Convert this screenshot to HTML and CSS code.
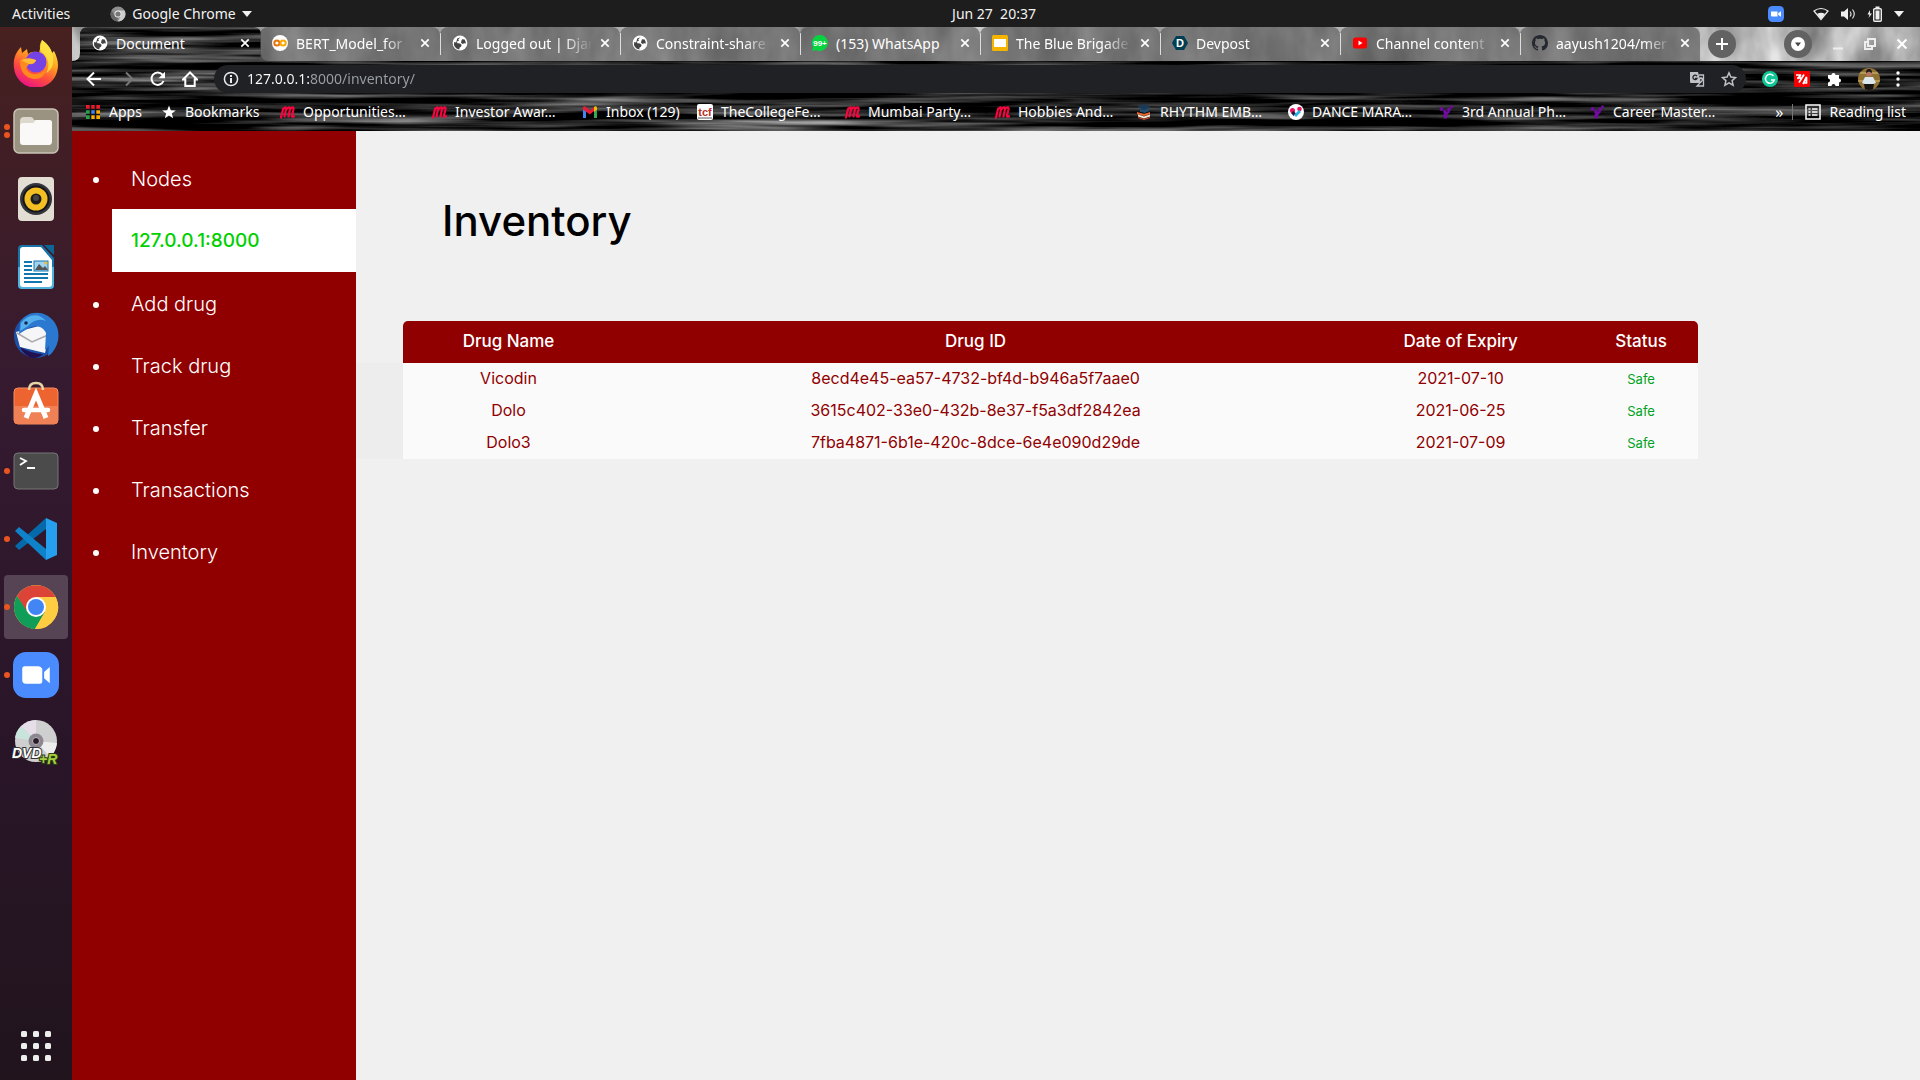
FILE: index.html
```html
<!DOCTYPE html>
<html lang="en">
<head>
<meta charset="utf-8">
<title>Document</title>
<link rel="stylesheet" href="styles.css">
</head>
<body>
<svg class="defs" width="0" height="0" aria-hidden="true">
  <defs>
    <symbol id="globe" viewBox="0 0 16 16"><circle cx="8" cy="8" r="7.4" fill="#fff"/><path d="M8.6 2.2 6.3 4.3l.6 1.5-2 .7.5 1.8 2.700.2 1.500 1.500-.6 1.800-1.600.9v1.900A6 6 0 0 1 2.200 7l2 .4L5.200 3.500ZM10 4.300l2.600.3A6 6 0 0 1 13.800 8.600l-1.600-.3-1.500.8-1.700-1.400.3-1.500Z" fill="#444"/></symbol>
    <symbol id="cross" viewBox="0 0 10 10"><path d="M1.300 1.300l7.400 7.400M8.700 1.300l-7.400 7.400" stroke="#fff" stroke-width="1.700" fill="none"/></symbol>
    <symbol id="meetup" viewBox="0 0 16 16"><path d="M2 13.500 4.200 4.600M4 5.500C6 2.500 7.600 3 7 5.600L5.500 12.500M7.300 5.500C9.500 2.500 11.500 3 10.900 5.500L9.500 12.500M11 5.500c1.500-3 4-2.800 3.500-.2L13 11.500c-.3 1.500.7 1.500 2 .7" fill="none" stroke="#f5063f" stroke-width="2.200" stroke-linecap="round" stroke-linejoin="round"/></symbol>
    <symbol id="yocket" viewBox="0 0 16 16"><g fill="#6f0b9e"><circle cx="3.500" cy="5" r="2"/><circle cx="7" cy="7.500" r="1.700"/><circle cx="13.500" cy="2.800" r="1.500"/><circle cx="11" cy="5.500" r="2"/><path d="M5 7l3.500 1L11 6l1 2-2.800 3-.2 3.500H6.200L5 12l1-2Z"/></g></symbol>
    <symbol id="camera" viewBox="0 0 24 16"><path d="M1 3q0-2 2-2h11q2 0 3 2v10q0 2-2 2H4q-3 0-3-3ZM18.500 5.500 23 1.500v13l-4.500-4Z" fill="#fff"/></symbol>
  </defs>
</svg>

<header class="topbar">
  <div class="topbar-left">
    <button class="sys-button">Activities</button>
    <button class="sys-button app-menu">
      <svg width="16" height="16" viewBox="0 0 16 16"><circle cx="8" cy="8" r="7.500" fill="#8f8f8f"/><path d="M8 4.500h6.600A7.500 7.500 0 0 1 8 15.500l3-5.700Z" fill="#ccc"/><path d="M1.600 4.200 5 10l3 2-1 3.300A7.500 7.500 0 0 1 1.600 4.200Z" fill="#666"/><circle cx="8" cy="8" r="3.500" fill="#eee"/><circle cx="8" cy="8" r="2.600" fill="#777"/></svg>
      <span>Google Chrome</span>
      <svg width="10" height="6" viewBox="0 0 10 6"><path d="M0 0h10L5 6Z" fill="#f2f2f2"/></svg>
    </button>
  </div>
  <button class="sys-button clock">Jun 27&nbsp; 20:37</button>
  <div class="tray">
    <svg class="tray-zoom" width="16" height="16" viewBox="0 0 16 16"><rect width="16" height="16" rx="4.500" fill="#4a8cff"/><path d="M3 5.500h6.500v5H4q-1 0-1-1ZM10.300 7l2.700-1.700v5.400L10.300 9Z" fill="#fff"/></svg>
    <svg width="16" height="14" viewBox="0 0 16 14"><path d="M1 4q7-5 14 0L8 12.500Z" fill="none" stroke="#eee" stroke-width="1.200"/><path d="M4 7q4-2.500 8 0l-4 5Z" fill="#eee"/></svg>
    <svg width="16" height="14" viewBox="0 0 16 14"><path d="M1 4.500h3L8 1v12L4 9.500H1Z" fill="#eee"/><path d="M10 4.500q2 2.500 0 5M12.500 2.500q3.500 4.500 0 9" fill="none" stroke="#ddd" stroke-width="1.200"/></svg>
    <svg width="16" height="16" viewBox="0 0 16 16"><path d="M3 4 .5 8.500h2L1.500 12 5 7.500H3Z" fill="#eee"/><rect x="6.700" y="2.700" width="7.600" height="12.600" rx="1" fill="none" stroke="#eee" stroke-width="1.400"/><rect x="8.500" y="4.500" width="4" height="9" fill="#eee"/><rect x="8.500" y=".5" width="4" height="2" fill="#eee"/></svg>
    <svg width="10" height="6" viewBox="0 0 10 6"><path d="M0 0h10L5 6Z" fill="#f2f2f2"/></svg>
  </div>
</header>

<div class="desktop">
  <nav class="dock" aria-label="Dock">
    <button class="dock-item" aria-label="Firefox">
      <svg width="48" height="48" viewBox="0 0 48 48"><defs><linearGradient id="ff" x1=".8" y1="0" x2=".3" y2="1"><stop offset="0" stop-color="#fff44f"/><stop offset=".4" stop-color="#ffa020"/><stop offset=".7" stop-color="#ff4a40"/><stop offset="1" stop-color="#e8108a"/></linearGradient></defs><path d="M30 1c7 5 9 9 10 13l2-2c4 8 5 14 3 21A22 22 0 0 1 2 29c-1-8 1-15 7-21l1 6 5-4 1 5q5-4 11-1Z" fill="url(#ff)"/><path d="M30 1c-3 5-3 9 1 13 6 5 7 14 3 20 6-3 8-9 7-15 0-7-5-13-11-18Z" fill="#ffe444" opacity=".8"/><circle cx="24" cy="23" r="10.500" fill="#7542e5"/><path d="M8 22q7-5 16-1-1 5-7 4l-3 4q3 7 11 6 6-1 9-5-1 10-12 10C13 39 8 32 8 22Z" fill="#ff8a20"/><path d="M9 21q8-3 15 0-1 4-7 4Z" fill="#ffbd3a"/></svg>
    </button>
    <button class="dock-item running double" aria-label="Files">
      <svg width="48" height="48" viewBox="0 0 48 48"><rect x="2" y="2" width="44" height="44" rx="5" fill="#9b9381" stroke="#c8c3b5" stroke-width="1.500"/><path d="M8 14q0-4 4-4h7q2 0 3 3h15q3 0 3 3v5H8Z" fill="#ddd8ce"/><path d="M8 19q0-3 3-3h10l3-3h13q3 0 3 3v18q0 4-3 4H11q-3 0-3-3Z" fill="#faf9f7"/></svg>
    </button>
    <button class="dock-item" aria-label="Rhythmbox">
      <svg width="48" height="48" viewBox="0 0 48 48"><rect x="6" y="2" width="36" height="44" rx="4" fill="#e2ded3"/><circle cx="24" cy="24" r="16" fill="#33343c"/><circle cx="24" cy="24" r="13.500" fill="#15161a"/><circle cx="24" cy="24" r="11.500" fill="#f3bf22"/><circle cx="24" cy="24" r="5.500" fill="#1c1c1c"/><circle cx="24" cy="23" r="3" fill="#444"/></svg>
    </button>
    <button class="dock-item" aria-label="LibreOffice Writer">
      <svg width="48" height="48" viewBox="0 0 48 48"><path d="M10 2h20l12 13v27q0 4-4 4H10q-4 0-4-4V6q0-4 4-4Z" fill="#1773a8"/><path d="M6 24h36v18q0 4-4 4H10q-4 0-4-4Z" fill="#4fb2e0"/><path d="M11 4h18l11 13v24q0 3-3 3H11q-3 0-3-3V7q0-3 3-3Z" fill="#fff"/><path d="M32 2h10v10Z" fill="#0c6798"/><path d="M12 19h8M12 23h8M12 27h8M12 31h24M12 35h24M12 39h18" stroke="#1476ae" stroke-width="2"/><rect x="22" y="18" width="14" height="10" fill="#9ed4f2" stroke="#1476ae"/><path d="m23 27 4-6 4 4 2-2 3 4Z" fill="#555"/><circle cx="34" cy="20" r="1.500" fill="#f9b929"/></svg>
    </button>
    <button class="dock-item" aria-label="Thunderbird">
      <svg width="48" height="48" viewBox="0 0 48 48"><circle cx="24" cy="25" r="22" fill="#1d4fa6"/><path d="M4 21 31 14 37 26 33 42 8 36Z" fill="#f6f6f8"/><path d="m5 22 15 9 16-7" fill="none" stroke="#aaa" stroke-width="1.500"/><path d="M8 11C15-1 34-2 43 12c6 10 4 22-4 31l-3 2 1-10-4 4 1-17C31 15 23 13 15 18l-8 5Z" fill="#2a78cf"/><path d="M9 12C16 3 27 1 34 10q-10-4-18 5l-8 5Z" fill="#57b0ee"/><path d="M8 36q12 7 23 7-4 4-10 4Q12 45 8 36Z" fill="#210f50"/><circle cx="14" cy="12" r="1.800" fill="#142a55"/></svg>
    </button>
    <button class="dock-item" aria-label="Ubuntu Software">
      <svg width="48" height="48" viewBox="0 0 48 48"><rect x="2" y="9" width="44" height="36" rx="4" fill="#ee6430" stroke="#f58c60"/><path d="M2 27h44v14q0 4-4 4H6q-4 0-4-4Z" fill="#f08055"/><path d="M17 11q0-7 7-7t7 7" fill="none" stroke="#e8d6a6" stroke-width="2.500"/><path d="M14 39 24 15l10 24" fill="none" stroke="#fff" stroke-width="5"/><path d="M12 31h24" stroke="#fff" stroke-width="4.500" stroke-linecap="round"/></svg>
    </button>
    <button class="dock-item running" aria-label="Terminal">
      <svg width="48" height="48" viewBox="0 0 48 48"><rect x="2" y="6" width="44" height="36" rx="4" fill="#4b4b4b" stroke="#777"/><path d="m8 11 6 3-6 4M15 21h8" fill="none" stroke="#fff" stroke-width="1.800"/></svg>
    </button>
    <button class="dock-item running" aria-label="Visual Studio Code">
      <svg width="48" height="48" viewBox="0 0 48 48"><path d="m3 31 4 4 27-21V3Z" fill="#0669aa"/><path d="m3 16 4-4 27 22v11Z" fill="#0f83ca"/><path d="m34 3 11 5v32l-11 5Z" fill="#26a0ee"/></svg>
    </button>
    <button class="dock-item running active" aria-label="Google Chrome">
      <svg width="48" height="48" viewBox="0 0 48 48"><circle cx="24" cy="24" r="22" fill="#ffcd42"/><path d="M24 24 43.500 14A22 22 0 0 0 5 13L14 28Z" fill="#db4437"/><path d="M5 13A22 22 0 0 0 23 46l10-17-9-5-9 4Z" fill="#109d58"/><path d="M24 14h19.700A22 22 0 0 1 23 46l10-17Z" fill="#ffcd42"/><circle cx="24" cy="24" r="10" fill="#fff"/><circle cx="24" cy="24" r="8" fill="#4285f4"/></svg>
    </button>
    <button class="dock-item running" aria-label="Zoom">
      <svg width="48" height="48" viewBox="0 0 48 48"><rect x="1" y="1" width="46" height="46" rx="13" fill="#4a8cff"/><use href="#camera" x="9" y="14" width="30" height="20"/></svg>
    </button>
    <button class="dock-item" aria-label="DVD+R disc">
      <svg width="48" height="48" viewBox="0 0 48 48"><circle cx="24" cy="22" r="21" fill="#cfcfcf"/><path d="M24 22 9 7q7-6 15-6Z" fill="#e6dfe9"/><path d="M24 22 3 19q1-7 6-12Z" fill="#c9e4dc"/><path d="m24 22 14 16q6-5 7-14Z" fill="#ededed"/><circle cx="24" cy="22" r="7.500" fill="#8c8790"/><circle cx="24" cy="22" r="3.500" fill="#2b1a2c" stroke="#bbb"/><text x="0" y="39" class="disc-text" font-size="14" fill="#fff" stroke="#333" stroke-width="2">DVD<tspan x="27" y="45" fill="#a5cf42" stroke="#2c4010">+R</tspan></text></svg>
    </button>
    <button class="dock-item show-apps" aria-label="Show Applications">
      <svg width="30" height="30" viewBox="0 0 30 30" fill="#eeeeec"><rect width="6" height="6" rx="1.500"/><rect x="12" width="6" height="6" rx="1.500"/><rect x="24" width="6" height="6" rx="1.500"/><rect y="12" width="6" height="6" rx="1.500"/><rect x="12" y="12" width="6" height="6" rx="1.500"/><rect x="24" y="12" width="6" height="6" rx="1.500"/><rect y="24" width="6" height="6" rx="1.500"/><rect x="12" y="24" width="6" height="6" rx="1.500"/><rect x="24" y="24" width="6" height="6" rx="1.500"/></svg>
    </button>
  </nav>

  <div class="window">
    <div class="chrome">
      <svg class="streaks" aria-hidden="true"><defs><filter id="grain" x="0" y="0" width="100%" height="100%" color-interpolation-filters="sRGB"><feTurbulence type="fractalNoise" baseFrequency="0.005 0.14" numOctaves="3" seed="7"/><feColorMatrix values="1.300 0 0 0 -.53  1.300 0 0 0 -.53  1.300 0 0 0 -.53  0 0 0 0 1"/></filter></defs><rect width="100%" height="100%" filter="url(#grain)"/></svg>
      <div class="tabstrip">
        <svg class="branches" aria-hidden="true"><defs><filter id="bark" x="0" y="0" width="100%" height="100%" color-interpolation-filters="sRGB"><feTurbulence type="fractalNoise" baseFrequency="0.025 0.012" numOctaves="4" seed="12"/><feColorMatrix values=".6 0 0 0 .38  .6 0 0 0 .38  .6 0 0 0 .38  0 0 0 0 1"/></filter></defs><rect width="100%" height="100%" filter="url(#bark)"/></svg>
        <div class="tabs">
          <div class="tab current"><svg class="tab-icon"><use href="#globe"/></svg><span class="tab-title">Document</span><button class="tab-close" aria-label="Close tab"><svg width="10" height="10"><use href="#cross"/></svg></button></div>
          <div class="tab"><svg class="tab-icon" viewBox="0 0 16 16"><circle cx="8" cy="8" r="8" fill="#fff"/><circle cx="4.900" cy="8" r="2.600" fill="none" stroke="#e8710a" stroke-width="2"/><circle cx="11.100" cy="8" r="2.600" fill="none" stroke="#f9ab00" stroke-width="2"/></svg><span class="tab-title">BERT_Model_for</span><button class="tab-close" aria-label="Close tab"><svg width="10" height="10"><use href="#cross"/></svg></button></div>
          <div class="tab"><svg class="tab-icon"><use href="#globe"/></svg><span class="tab-title">Logged out | Djan</span><button class="tab-close" aria-label="Close tab"><svg width="10" height="10"><use href="#cross"/></svg></button></div>
          <div class="tab"><svg class="tab-icon"><use href="#globe"/></svg><span class="tab-title">Constraint-share</span><button class="tab-close" aria-label="Close tab"><svg width="10" height="10"><use href="#cross"/></svg></button></div>
          <div class="tab"><svg class="tab-icon" viewBox="0 0 16 16"><path d="M8 0a8 8 0 1 1-4 15L0 16l1-4A8 8 0 0 1 8 0Z" fill="#07d341"/><text x="8" y="11" text-anchor="middle" class="badge-text" font-size="8" fill="#fff">99+</text></svg><span class="tab-title">(153) WhatsApp</span><button class="tab-close" aria-label="Close tab"><svg width="10" height="10"><use href="#cross"/></svg></button></div>
          <div class="tab"><svg class="tab-icon" viewBox="0 0 16 16"><rect width="16" height="16" rx="1.500" fill="#f4b400"/><rect x="2" y="4" width="12" height="8" fill="#fff"/></svg><span class="tab-title">The Blue Brigade</span><button class="tab-close" aria-label="Close tab"><svg width="10" height="10"><use href="#cross"/></svg></button></div>
          <div class="tab"><svg class="tab-icon" viewBox="0 0 16 16"><path d="M4 1h8l4 7-4 7H4L0 8Z" fill="#003e54"/><text x="8" y="12" text-anchor="middle" class="badge-text" font-size="11" fill="#fff">D</text></svg><span class="tab-title">Devpost</span><button class="tab-close" aria-label="Close tab"><svg width="10" height="10"><use href="#cross"/></svg></button></div>
          <div class="tab"><svg class="tab-icon" viewBox="0 0 16 16"><rect x="1" y="2.500" width="14" height="11" rx="2.500" fill="#f00"/><path d="m6.500 5.500 4 2.500-4 2.500Z" fill="#fff"/></svg><span class="tab-title">Channel content</span><button class="tab-close" aria-label="Close tab"><svg width="10" height="10"><use href="#cross"/></svg></button></div>
          <div class="tab"><svg class="tab-icon" viewBox="0 0 16 16"><path fill="#24292f" d="M8 0C3.580 0 0 3.580 0 8c0 3.540 2.290 6.530 5.470 7.590.4.070.55-.17.55-.38 0-.19-.01-.82-.01-1.490-2.010.37-2.530-.49-2.690-.94-.09-.23-.48-.94-.82-1.130-.28-.15-.68-.52-.01-.53.63-.01 1.080.58 1.230.82.72 1.210 1.870.87 2.330.66.070-.52.28-.87.51-1.070-1.780-.2-3.640-.89-3.640-3.950 0-.87.31-1.590.82-2.150-.08-.2-.36-1.020.08-2.120 0 0 .67-.21 2.200.82.640-.18 1.320-.27 2-.27s1.360.09 2 .27c1.530-1.040 2.200-.82 2.200-.82.44 1.100.16 1.920.08 2.120.51.560.82 1.270.82 2.150 0 3.070-1.870 3.750-3.650 3.950.29.250.54.730.54 1.480 0 1.070-.01 1.930-.01 2.200 0 .21.15.46.55.38A8.010 8.010 0 0 0 16 8c0-4.420-3.580-8-8-8Z"/></svg><span class="tab-title">aayush1204/mer</span><button class="tab-close" aria-label="Close tab"><svg width="10" height="10"><use href="#cross"/></svg></button></div>
        </div>
        <button class="round-button" aria-label="New tab"><svg width="14" height="14" viewBox="0 0 14 14"><path d="M7 1v12M1 7h12" stroke="#fff" stroke-width="2"/></svg></button>
        <div class="window-controls">
          <button class="round-button" aria-label="Search tabs"><svg width="14" height="14" viewBox="0 0 14 14"><circle cx="7" cy="7" r="7" fill="#fff"/><path d="M4 5.500h6L7 9.500Z" fill="#444"/></svg></button>
          <button class="control" aria-label="Minimize"><svg width="12" height="12" viewBox="0 0 12 12"><path d="M1 10.500h10" stroke="#eee" stroke-width="2"/></svg></button>
          <button class="control" aria-label="Restore"><svg width="12" height="12" viewBox="0 0 12 12"><path d="M4 1h7v7H4ZM4 4H1v7h7V8" fill="none" stroke="#eee" stroke-width="2"/></svg></button>
          <button class="control" aria-label="Close"><svg width="12" height="12"><use href="#cross"/></svg></button>
        </div>
      </div>

      <div class="toolbar">
        <button class="tool" aria-label="Back"><svg width="16" height="16" viewBox="0 0 16 16"><path d="M15 8H2M8 1.500 1.500 8 8 14.500" fill="none" stroke="#fff" stroke-width="2"/></svg></button>
        <button class="tool" aria-label="Forward"><svg width="16" height="16" viewBox="0 0 16 16"><path d="M1 8h13M8 1.500 14.500 8 8 14.500" fill="none" stroke="#777" stroke-width="2"/></svg></button>
        <button class="tool" aria-label="Reload"><svg width="16" height="16" viewBox="0 0 16 16"><path d="M13.500 10A6.200 6.200 0 1 1 12.500 3.700L14 5.500" fill="none" stroke="#fff" stroke-width="2"/><path d="M15 .8v6.400H8.600Z" fill="#fff"/></svg></button>
        <button class="tool" aria-label="Home"><svg width="16" height="16" viewBox="0 0 16 16"><path d="M1 8.500 8 1.500l7 7h-2.300V15H3.300V8.500Z" fill="none" stroke="#fff" stroke-width="2"/></svg></button>
        <div class="omnibox">
          <svg width="16" height="16" viewBox="0 0 16 16"><circle cx="8" cy="8" r="6.600" fill="none" stroke="#e8eaed" stroke-width="1.500"/><path d="M8 7v5M8 4v2" stroke="#e8eaed" stroke-width="2"/></svg>
          <input class="address" type="text" aria-label="Address" value="127.0.0.1:8000/inventory/">
          <button class="tool" aria-label="Translate"><svg width="16" height="16" viewBox="0 0 16 16"><path d="M1 1h8l3 11H2q-1 0-1-1Z" fill="#bdc1c6"/><path d="M10 4h4.500v11H8l3-3M9.500 7.500h5M12 6v1.500M10.500 12q3-1.500 3-4" fill="none" stroke="#bdc1c6" stroke-width="1.300"/><path d="M8 5.200A2.200 2.200 0 1 0 8 7.500H6" fill="none" stroke="#202124" stroke-width="1.300"/></svg></button>
          <button class="tool" aria-label="Bookmark this tab"><svg width="16" height="16" viewBox="0 0 16 16"><path d="m8 1.800 1.900 4.200 4.600.5-3.400 3.100 1 4.600L8 11.900l-4.100 2.300 1-4.600L1.500 6.500l4.600-.5Z" fill="none" stroke="#bdc1c6" stroke-width="1.500"/></svg></button>
        </div>
        <button class="tool" aria-label="Grammarly"><svg width="16" height="16" viewBox="0 0 16 16"><circle cx="8" cy="8" r="8" fill="#0fc797"/><path d="M11.500 5A4.500 4.500 0 1 0 12.300 9H9" fill="none" stroke="#fff" stroke-width="1.500"/></svg></button>
        <button class="tool" aria-label="Extension"><svg width="16" height="16" viewBox="0 0 16 16"><rect width="16" height="16" rx="1" fill="#f40000"/><path d="M2 4h4v3H3M5 11.500l5-8M7 3.500 3.500 8M9 13l3.500-7v6H9.500" fill="none" stroke="#fff" stroke-width="1.700"/></svg></button>
        <button class="tool" aria-label="Extensions"><svg width="16" height="16" viewBox="0 0 16 16"><path d="M2 4h3.500a2 2 0 1 1 4 0H13v3.500a2 2 0 1 1 0 4V15H9.500a2 2 0 0 0-4 0H2v-3.500a2 2 0 0 0 0-4Z" fill="#fff"/></svg></button>
        <button class="tool" aria-label="Profile"><svg width="22" height="22" viewBox="0 0 22 22"><defs><clipPath id="face"><circle cx="11" cy="11" r="11"/></clipPath></defs><g clip-path="url(#face)"><path d="M0 0h22v22H0Z" fill="#8f7132"/><path d="M0 5h22M0 13h22" stroke="#b59855" stroke-width="2"/><path d="m4 15 3-6h8l3 6-3 1H7Z" fill="#dde8ee"/><path d="M6 16h10l-1 6H7Z" fill="#171313"/><circle cx="11" cy="5.500" r="3" fill="#b57861"/><path d="M8 5q0-4 3-4t3 4l-3-1.500Z" fill="#1d1414"/></g></svg></button>
        <button class="tool" aria-label="Menu"><svg width="4" height="16" viewBox="0 0 4 16" fill="#fff"><circle cx="2" cy="2" r="1.700"/><circle cx="2" cy="8" r="1.700"/><circle cx="2" cy="14" r="1.700"/></svg></button>
      </div>

      <nav class="bookmarks" aria-label="Bookmarks">
        <div class="bookmark-list">
          <a href="#"><svg class="mark" viewBox="0 0 16 16"><path d="M1 1h4v4H1ZM6 1h4v4H6ZM11 1h4v4h-4Z" fill="#ea1b2d"/><path d="M1 6h4v4H1ZM1 11h4v4H1Z" fill="#2aa04c"/><path d="M6 6h4v4H6Z" fill="#4285f4"/><path d="M11 6h4v4h-4ZM6 11h4v4H6ZM11 11h4v4h-4Z" fill="#fbaf08"/><path d="M5.500 1v14M10.500 1v14M1 5.500h14M1 10.500h14" stroke="#111" stroke-width="1.600"/></svg>Apps</a>
          <a href="#"><svg class="mark" viewBox="0 0 16 16"><path d="m8 1.500 1.800 4.700 5 .2-4 3.100 1.400 4.800L8 11.500l-4.200 2.800 1.400-4.800-4-3.100 5-.2Z" fill="#fff"/></svg>Bookmarks</a>
          <a href="#"><svg class="mark"><use href="#meetup"/></svg>Opportunities…</a>
          <a href="#"><svg class="mark"><use href="#meetup"/></svg>Investor Awar…</a>
          <a href="#"><svg class="mark" viewBox="0 0 16 16"><path d="M1 4v10h3V7Z" fill="#4285f4"/><path d="M12 7v7h3V4Z" fill="#34a853"/><path d="M1 3.500Q2 1.500 4 3l4 3.500L12 3v4L8 10.500 1 5.500Z" fill="#ea1b35"/><path d="M12 3q2-1.500 3 .5v2L12 8Z" fill="#fbbc04"/></svg>Inbox (129)</a>
          <a href="#"><svg class="mark" viewBox="0 0 16 16"><rect width="16" height="16" rx="2" fill="#fff"/><path d="M1 14h14" stroke="#555"/><text x="8" y="12" text-anchor="middle" class="badge-text" font-size="11" fill="#b82f22">tcf</text></svg>TheCollegeFe…</a>
          <a href="#"><svg class="mark"><use href="#meetup"/></svg>Mumbai Party…</a>
          <a href="#"><svg class="mark"><use href="#meetup"/></svg>Hobbies And…</a>
          <a href="#"><svg class="mark" viewBox="0 0 16 16"><path d="M1 3 8 0l7 3-7 3Z" fill="#1b3a58"/><path d="M4 5v3l5 1 4-2V4L8 6Z" fill="#214d70"/><path d="m1 8 7 2 6-2v2l-6 2-7-2Z" fill="#f0652f"/><path d="m2 10.500 6 2 6-2v2l-6 2-6-2Z" fill="#f6ead2"/><path d="m2 13 6 2 6-2v1l-6 2-6-2Z" fill="#d64b31"/></svg>RHYTHM EMB…</a>
          <a href="#"><svg class="mark" viewBox="0 0 16 16"><circle cx="8" cy="8" r="8" fill="#fff"/><circle cx="4.500" cy="6.500" r="2.500" fill="#ee1161"/><circle cx="11.500" cy="5" r="2.300" fill="#ee1161"/><path d="m3 9 2.500-2L8 9.500 5.500 12Z" fill="#2a1745"/><path d="m8 9 3-3 2 2-5 5-2-2Z" fill="#28b3e8"/></svg>DANCE MARA…</a>
          <a href="#"><svg class="mark"><use href="#yocket"/></svg>3rd Annual Ph…</a>
          <a href="#"><svg class="mark"><use href="#yocket"/></svg>Career Master…</a>
        </div>
        <button class="more" aria-label="More bookmarks">»</button>
        <button class="reading"><svg width="16" height="16" viewBox="0 0 16 16"><rect x="1" y="1" width="14" height="14" fill="none" stroke="#fff" stroke-width="1.500"/><path d="M3.500 5h2M7 5h5.500M3.500 8h2M7 8h5.500M3.500 11h2M7 11h5.500" stroke="#fff" stroke-width="1.500"/></svg>Reading list</button>
      </nav>
    </div>

    <div class="page">
      <aside class="sidebar">
        <ul class="menu">
          <li><a href="#">Nodes</a></li>
          <li class="selected"><a href="#">127.0.0.1:8000</a></li>
          <li><a href="#">Add drug</a></li>
          <li><a href="#">Track drug</a></li>
          <li><a href="#">Transfer</a></li>
          <li><a href="#">Transactions</a></li>
          <li><a href="#">Inventory</a></li>
        </ul>
      </aside>
      <main class="content">
        <h1>Inventory</h1>
        <table class="drugs">
          <colgroup><col class="col-name"><col class="col-id"><col class="col-date"><col class="col-status"></colgroup>
          <thead><tr><th scope="col">Drug Name</th><th scope="col">Drug ID</th><th scope="col">Date of Expiry</th><th scope="col">Status</th></tr></thead>
          <tbody>
            <tr><td>Vicodin</td><td>8ecd4e45-ea57-4732-bf4d-b946a5f7aae0</td><td>2021-07-10</td><td class="safe">Safe</td></tr>
            <tr><td>Dolo</td><td>3615c402-33e0-432b-8e37-f5a3df2842ea</td><td>2021-06-25</td><td class="safe">Safe</td></tr>
            <tr><td>Dolo3</td><td>7fba4871-6b1e-420c-8dce-6e4e090d29de</td><td>2021-07-09</td><td class="safe">Safe</td></tr>
          </tbody>
        </table>
      </main>
    </div>
  </div>
</div>
</body>
</html>
```
FILE: styles.css
```css
* { box-sizing: border-box; }

body {
  margin: 0;
  min-height: 100vh;
  display: flex;
  flex-direction: column;
  font-family: "Noto Sans", "Open Sans", sans-serif;
  font-size: 14px;
  color: #fff;
  background: #1d1d1d;
}

.defs { position: absolute; }

button {
  display: flex;
  align-items: center;
  justify-content: center;
  padding: 0;
  border: 0;
  background: none;
  color: inherit;
  font: inherit;
}

svg { flex: none; }

a { color: inherit; text-decoration: none; }

/* System bar: the clock is centred on the area beside the dock */
.topbar {
  display: grid;
  grid-template-columns: 72px 1fr auto 1fr;
  align-items: center;
  height: 27px;
  padding: 0 16px 0 12px;
  background: #1d1d1d;
  color: #f2f2f2;
}

.topbar-left { grid-column: span 2; display: flex; gap: 40px; }
.app-menu { gap: 6px; }
.tray { display: flex; align-items: center; justify-content: flex-end; gap: 11px; }
.tray-zoom { margin-right: 18px; }

/* Dock */
.desktop { flex: 1; display: flex; }

.dock {
  flex: none;
  width: 72px;
  display: flex;
  flex-direction: column;
  align-items: center;
  gap: 4px;
  padding: 4px 0 2px;
  background: linear-gradient(#47201f, #351a30 35%, #2a1529 65%, #21141d);
}

.dock-item {
  position: relative;
  width: 64px;
  height: 64px;
  border-radius: 4px;
}

.dock-item.active { background: #564353; }

.running::before {
  content: "";
  position: absolute;
  left: 0;
  width: 6px;
  height: 6px;
  border-radius: 50%;
  background: #e95420;
}

.double::before { margin-bottom: 8px; box-shadow: 0 8px #e95420; }
.show-apps { margin-top: auto; }

.disc-text {
  font-family: "Liberation Sans", sans-serif;
  font-weight: bold;
  font-style: italic;
  paint-order: stroke;
}

.badge-text { font-family: "Liberation Sans", sans-serif; font-weight: bold; }

/* Browser window */
.window { flex: 1; min-width: 0; display: flex; flex-direction: column; }

.chrome { position: relative; isolation: isolate; background: #111; }

.streaks, .branches {
  position: absolute;
  inset: 0;
  width: 100%;
  height: 100%;
  z-index: -1;
}

.tabstrip {
  position: relative;
  display: flex;
  align-items: center;
  height: 34px;
  padding: 0 8px;
}

.tabstrip .branches { clip-path: path("M0 0H16Q8 0 8 8V26Q8 34 0 34ZM181 0H3000V34H197Q189 34 189 26V8Q189 0 181 0Z"); }

.tabs { flex: 1; min-width: 0; display: flex; height: 34px; }

.tab {
  flex: 1;
  min-width: 0;
  display: flex;
  align-items: center;
  gap: 8px;
  padding: 0 10px 2px 12px;
  border-radius: 8px 8px 0 0;
  background-color: rgb(80 80 80 / 60%);
}

.tab.current { background: none; }

.tab + .tab + .tab {
  background-image: linear-gradient(#ddd, #ddd);
  background-size: 1px 22px;
  background-position: 0 6px;
  background-repeat: no-repeat;
}

.tab-icon { width: 16px; height: 16px; }

.tab-title {
  flex: 1;
  min-width: 0;
  overflow: hidden;
  white-space: nowrap;
  mask-image: linear-gradient(90deg, #000 calc(100% - 28px), transparent);
}

.tab.current .tab-title, .tab:nth-child(5) .tab-title { mask-image: none; }

.round-button {
  width: 28px;
  height: 28px;
  border-radius: 50%;
  background: #626262;
}

.tabs + .round-button { margin-left: 8px; }
.window-controls { display: flex; align-items: center; gap: 20px; margin: 0 4px 0 48px; }
.control { width: 12px; height: 12px; }

.toolbar {
  display: flex;
  align-items: center;
  gap: 16px;
  height: 35px;
  padding: 0 20px 0 14px;
}

.omnibox {
  flex: 1;
  display: flex;
  align-items: center;
  gap: 16px;
  height: 28px;
  padding: 0 9px;
  border-radius: 14px;
  background: #202124;
}

.address {
  flex: 1;
  min-width: 0;
  margin-left: -8px;
  padding: 0;
  border: 0;
  font: inherit;
  color: #9aa0a6;
  background: linear-gradient(90deg, #fff 62px, #9aa0a6 62px);
  background-clip: text;
  -webkit-text-fill-color: transparent;
}

.bookmarks {
  display: flex;
  align-items: center;
  height: 35px;
  padding: 0 14px 4px 13px;
}

.bookmark-list {
  flex: 1;
  min-width: 0;
  display: grid;
  grid-template-columns: 76px 118px 152px 151px 115px 147px 150px 142px 152px 150px 151px 150px;
  overflow: hidden;
  white-space: nowrap;
}

.bookmark-list a { display: flex; align-items: center; gap: 8px; }
.mark { width: 16px; height: 16px; }
.more { padding: 0 9px; font-size: 16px; }
.reading { gap: 8px; height: 16px; padding-left: 12px; border-left: 1px solid #777; }

/* Inventory page */
.page {
  flex: 1;
  display: flex;
  font-family: Inter, sans-serif;
  font-size: 16px;
  background: #f0f0f0;
}

.sidebar { flex: none; width: 284px; background: #900000; }

.menu {
  margin: 0;
  padding: 16px 0 0 40px;
  font-size: 20px;
  font-weight: 300;
  line-height: 22px;
}

.menu a { display: block; padding: 21px 19px 19px; }
.menu .selected { background: #fff; color: #00d000; font-size: 19px; font-weight: 500; list-style: none; }
.menu .selected a { padding-bottom: 20px; }

.content { flex: 1; min-width: 0; }

h1 {
  margin: 65px 0 76px 86px;
  font-size: 42px;
  font-weight: 500;
  line-height: 49px;
  color: #000;
}

.drugs {
  width: calc(83% - 3px);
  margin-left: 47px;
  border-collapse: separate;
  border-spacing: 0;
  table-layout: fixed;
  text-align: center;
  line-height: 20px;
  color: #900000;
}

.col-name { width: 211px; }
.col-date { width: 247px; }
.col-status { width: 114px; }

th { padding: 10px 0 12px; background: #900000; color: #fff; font-size: 17px; font-weight: 500; }
th:first-child { border-radius: 5px 0 0 0; }
th:last-child { border-radius: 0 5px 0 0; }
td { padding: 5px 0 7px; background: #fafafa; }
td:first-child { box-shadow: -47px 0 #ededed; }
td.safe { padding: 6px 0; font-size: 13px; color: #00a322; }
```
